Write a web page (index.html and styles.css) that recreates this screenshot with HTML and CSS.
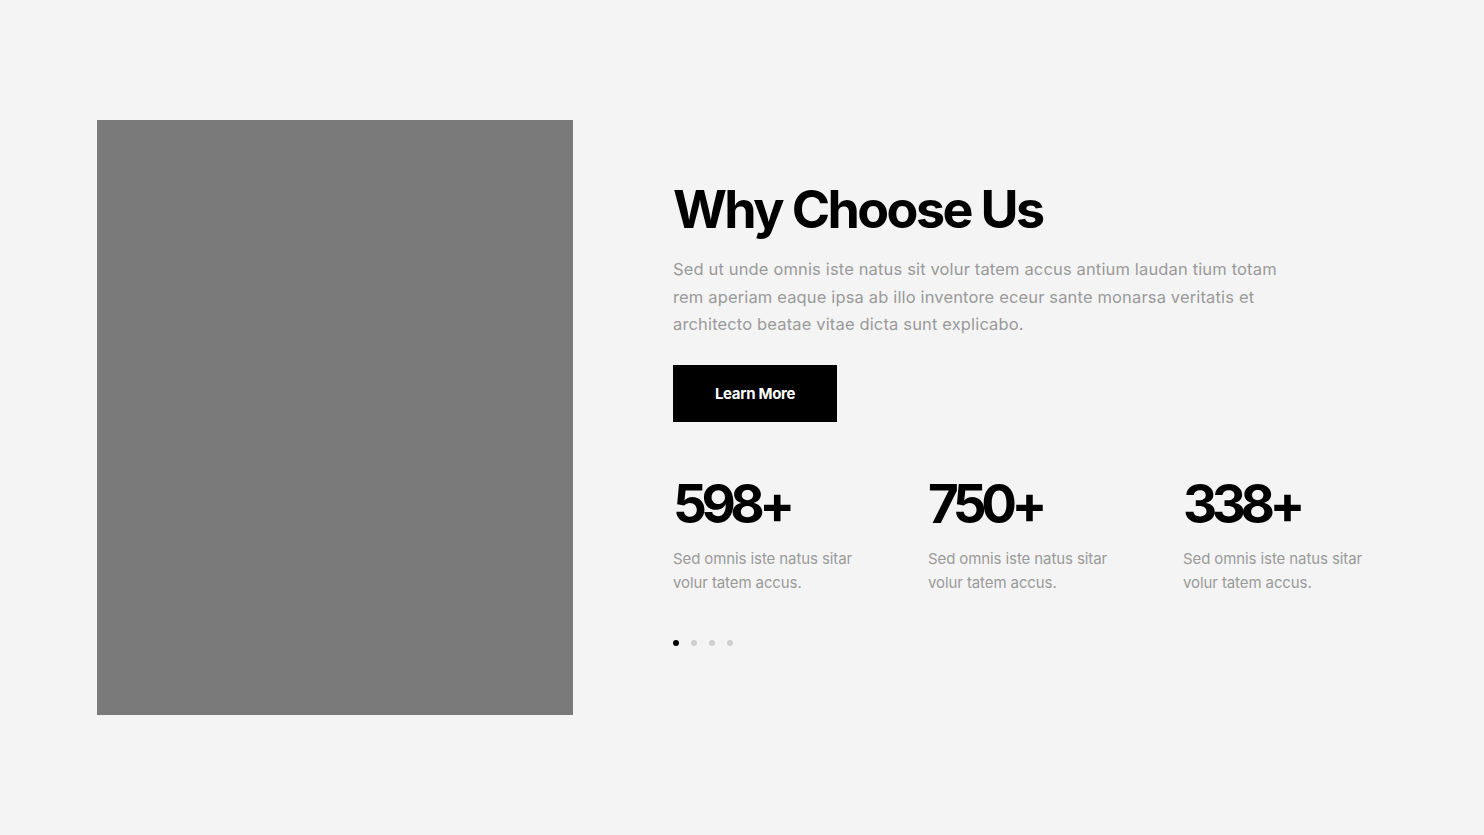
FILE: index.html
```html
<!DOCTYPE html>
<html lang="en">
<head>
<meta charset="utf-8">
<title>Why Choose Us</title>
<link rel="stylesheet" href="styles.css">
</head>
<body>
<section class="why">
  <div class="why__media"></div>
  <div class="why__content">
    <h2 class="why__title">Why Choose Us</h2>
    <p class="why__text">Sed ut unde omnis iste natus sit volur tatem accus antium laudan tium totam rem aperiam eaque ipsa ab illo inventore eceur sante monarsa veritatis et architecto beatae vitae dicta sunt explicabo.</p>
    <a class="why__btn" href="#">Learn More</a>
    <div class="stats">
      <div class="stat">
        <div class="stat__num">598+</div>
        <p class="stat__text">Sed omnis iste natus sitar volur tatem accus.</p>
      </div>
      <div class="stat">
        <div class="stat__num">750+</div>
        <p class="stat__text">Sed omnis iste natus sitar volur tatem accus.</p>
      </div>
      <div class="stat">
        <div class="stat__num">338+</div>
        <p class="stat__text">Sed omnis iste natus sitar volur tatem accus.</p>
      </div>
    </div>
    <div class="dots">
      <span class="dot dot--active"></span>
      <span class="dot"></span>
      <span class="dot"></span>
      <span class="dot"></span>
    </div>
  </div>
</section>
</body>
</html>
```

FILE: styles.css
```css
* { box-sizing: border-box; }
html, body { margin: 0; padding: 0; }
body {
  background: #f4f4f4;
  font-family: Inter, "Noto Sans", sans-serif;
  color: #000;
  width: 1484px;
  height: 835px;
  overflow: hidden;
}
.why {
  display: flex;
  align-items: flex-start;
  padding: 120px 0 0 97px;
}
.why__media {
  width: 476px;
  height: 595px;
  background: #7a7a7b;
  flex: none;
}
.why__content {
  margin-left: 100px;
  padding-top: 58px;
}
.why__title {
  margin: 0;
  font-size: 52px;
  font-weight: 700;
  letter-spacing: -2.6px;
  line-height: 64px;
}
.why__text {
  margin: 14px 0 0;
  width: 622px;
  font-size: 16.5px;
  line-height: 27.5px;
  color: #9a9a9a;
  letter-spacing: 0.15px;
}
.why__btn {
  display: flex;
  align-items: center;
  justify-content: center;
  width: 164px;
  height: 57px;
  margin-top: 26px;
  background: #000;
  color: #fff;
  font-size: 15px;
  font-weight: 700;
  text-decoration: none;
  letter-spacing: -0.3px;
}
.stats {
  display: flex;
  margin-top: 52px;
}
.stat {
  width: 255px;
}
.stat:last-child { width: auto; }
.stat__num {
  font-size: 53px;
  font-weight: 700;
  letter-spacing: -5.5px;
  line-height: 60px;
}
.stat__text {
  margin: 13px 0 0;
  width: 190px;
  font-size: 15px;
  line-height: 24px;
  color: #9a9a9a;
  letter-spacing: -0.1px;
}
.dots {
  display: flex;
  gap: 12px;
  margin-top: 45px;
}
.dot {
  width: 6px;
  height: 6px;
  border-radius: 50%;
  background: #cfcfcf;
}
.dot--active { background: #000; }
```
